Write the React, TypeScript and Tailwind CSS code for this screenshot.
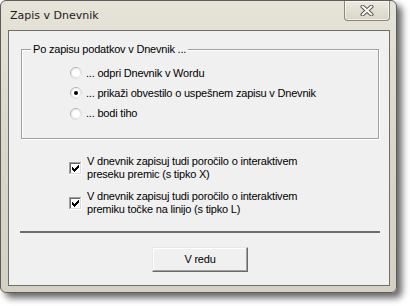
import React from "react";

const Radio = ({ checked }: { checked?: boolean }) => (
  <svg width="12" height="12" viewBox="0 0 12 12" className="shrink-0">
    <defs>
      <linearGradient id={checked ? "rg1" : "rg0"} x1="0" y1="0" x2="1" y2="1">
        <stop offset="0" stopColor="#9a9a9a" />
        <stop offset="1" stopColor="#f4f4f4" />
      </linearGradient>
    </defs>
    <circle cx="6" cy="6" r="5.5" fill="#ffffff" stroke={`url(#${checked ? "rg1" : "rg0"})`} />
    <circle cx="6" cy="6" r="4.5" fill="#ffffff" stroke="#e6e6e6" />
    {checked && <circle cx="6" cy="6" r="2" fill="#000000" />}
  </svg>
);

const Check = () => (
  <svg width="13" height="13" viewBox="0 0 13 13" className="shrink-0" shapeRendering="crispEdges">
    <rect x="0" y="0" width="13" height="13" fill="#ffffff" />
    <rect x="0" y="0" width="12" height="1" fill="#a0a0a0" />
    <rect x="0" y="0" width="1" height="12" fill="#a0a0a0" />
    <rect x="1" y="1" width="10" height="1" fill="#696969" />
    <rect x="1" y="1" width="1" height="10" fill="#696969" />
    <rect x="1" y="11" width="11" height="1" fill="#dcdcdc" />
    <rect x="11" y="1" width="1" height="11" fill="#dcdcdc" />
    <rect x="0" y="12" width="13" height="1" fill="#ffffff" />
    <rect x="12" y="0" width="1" height="13" fill="#ffffff" />
    <rect x="9" y="3" width="1" height="3" fill="#000" />
    <rect x="8" y="4" width="1" height="3" fill="#000" />
    <rect x="7" y="5" width="1" height="3" fill="#000" />
    <rect x="6" y="6" width="1" height="3" fill="#000" />
    <rect x="5" y="7" width="1" height="3" fill="#000" />
    <rect x="4" y="6" width="1" height="3" fill="#000" />
    <rect x="3" y="5" width="1" height="3" fill="#000" />
  </svg>
);

export default function App() {
  const body = { fontFamily: '"Liberation Sans", Arial, sans-serif' };
  return (
    <div className="w-[410px] h-[306px] bg-white overflow-hidden">
      <div className="w-[397px] h-[293px] rounded-[6px] border border-[#5c5c5c] bg-gradient-to-b from-[#e6e3d8] via-[#dad6c8] to-[#d5d1c2] shadow-[5px_5px_7px_rgba(0,0,0,0.6)] flex flex-col pl-[7px] pr-[6px] pb-[6px]">
        <div className="h-[29px] flex justify-between shrink-0">
          <div
            className="self-center pl-[2px] pt-[1px] text-[11px] text-[#1a1a1a]"
            style={{ fontFamily: '"DejaVu Sans", Verdana, sans-serif' }}
          >
            Zapis v Dnevnik
          </div>
          <div className="self-start w-[46px] h-[20px] rounded-b-[4px] border border-t-0 border-[#8a877c] bg-gradient-to-b from-[#ece9df] to-[#d9d5c7] shadow-[inset_0_0_0_1px_rgba(255,255,255,0.6)] flex items-center justify-center">
            <svg width="14" height="11" viewBox="0 0 14 11">
              <path d="M2.5 1.5 L11.5 9.5 M11.5 1.5 L2.5 9.5" stroke="#55534c" strokeWidth="4" strokeLinecap="round" />
              <path d="M2.5 1.5 L11.5 9.5 M11.5 1.5 L2.5 9.5" stroke="#ffffff" strokeWidth="2" strokeLinecap="round" />
            </svg>
          </div>
        </div>
        <div
          className="flex-1 border border-[#6e6e6e] bg-[#f0f0f0] flex flex-col text-[11px] leading-[13px] tracking-[-0.2px] text-black"
          style={body}
        >
          <div className="relative ml-[12px] mt-[18px] w-[358px] h-[90px] border border-[#a0a0a0] shadow-[inset_1px_1px_0_#ffffff,1px_1px_0_#ffffff] flex flex-col pt-[13px] pl-[48px]">
            <span className="absolute left-[9px] top-[-7px] px-[2px] bg-[#f0f0f0]">
              Po zapisu podatkov v Dnevnik ...
            </span>
            <div className="h-[20px] flex items-center gap-[4px]">
              <Radio />
              <span>... odpri Dnevnik v Wordu</span>
            </div>
            <div className="h-[20px] flex items-center gap-[4px]">
              <Radio checked />
              <span>... prikaži obvestilo o uspešnem zapisu v Dnevnik</span>
            </div>
            <div className="h-[21px] flex items-center gap-[4px]">
              <Radio />
              <span>... bodi tiho</span>
            </div>
          </div>

          <div className="ml-[60px] mt-[16px] flex items-center gap-[5px]">
            <Check />
            <span>
              V dnevnik zapisuj tudi poročilo o interaktivem
              <br />
              preseku premic (s tipko X)
            </span>
          </div>
          <div className="ml-[60px] mt-[9px] flex items-center gap-[5px]">
            <Check />
            <span>
              V dnevnik zapisuj tudi poročilo o interaktivem
              <br />
              premiku točke na linijo (s tipko L)
            </span>
          </div>

          <div className="ml-[11px] mt-[15px] w-[360px] h-[2px] bg-[#6d6d6d]" />

          <div className="ml-[143px] mt-[14px] w-[96px] h-[25px] border border-t-[#e8e8e8] border-l-[#e8e8e8] border-r-[#6a6a6a] border-b-[#6a6a6a] bg-[#f0f0f0] shadow-[inset_-1px_-1px_0_#a0a0a0,inset_1px_1px_0_#ffffff] flex items-center justify-center">
            V redu
          </div>
        </div>
      </div>
    </div>
  );
}
